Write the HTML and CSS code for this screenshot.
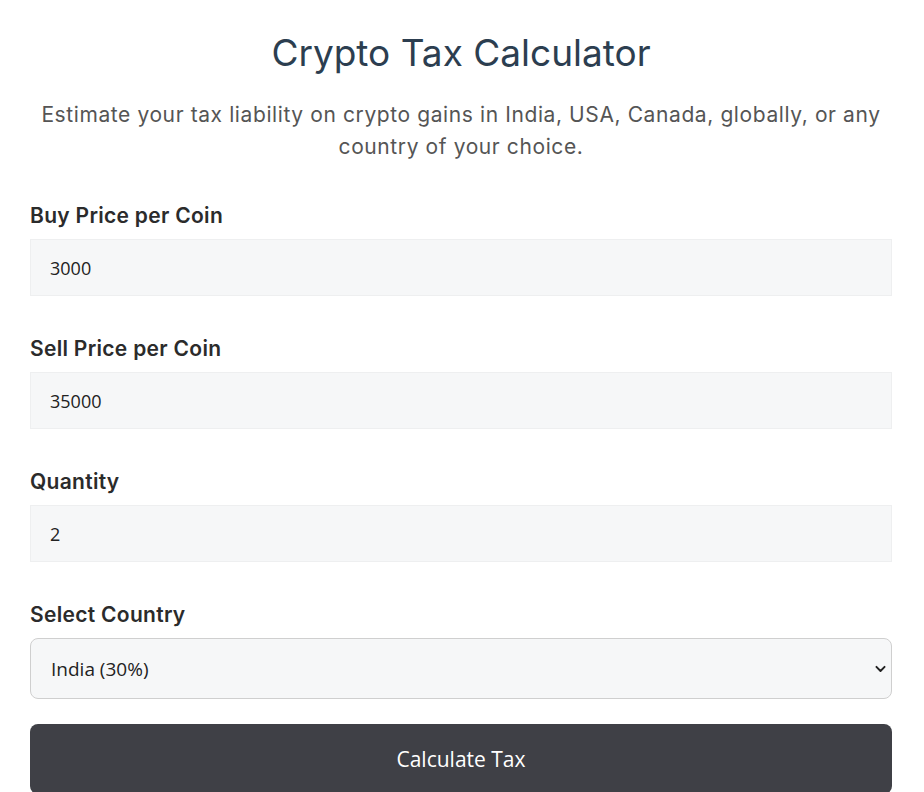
FILE: index.html
```html
<!DOCTYPE html>
<html>
  <head>
	<title>Crypto Tax Calculator</title>
	<meta charset="UTF-8">
	<meta name="viewport" content="width=device-width, initial-scale=1.0">
	<link rel="stylesheet" href="styles.css">
  </head>
  <body>
	<div class="calculator">
		<h1>Crypto Tax Calculator</h1>
		<p class="intro">Estimate your tax liability on crypto gains in India, USA, Canada, globally, or any country of your choice.</p>

		<form class="tax-form" autocomplete="off">
			<div class="field">
				<label for="buy">Buy Price per Coin</label>
				<input id="buy" type="number" value="3000" />
			</div>
			<div class="field">
				<label for="sell">Sell Price per Coin</label>
				<input id="sell" type="number" value="35000" />
			</div>
			<div class="field">
				<label for="qty">Quantity</label>
				<input id="qty" type="number" value="2" />
			</div>
			<div class="field">
				<label for="country">Select Country</label>
				<div class="select-wrap">
					<select id="country">
						<option>India (30%)</option>
						<option>USA (20%)</option>
						<option>Canada (25%)</option>
					</select>
					<svg class="chevron" viewBox="0 0 16 16" width="16" height="16"><path d="M3 6l5 5 5-5" fill="none" stroke="#222" stroke-width="2.4" stroke-linecap="round" stroke-linejoin="round"/></svg>
				</div>
			</div>
			<button type="button" class="calc-btn">Calculate Tax</button>
		</form>
	</div>
  </body>
</html>
```

FILE: styles.css
```css
html, body {
	box-sizing: border-box;
}

body {
	margin: 0;
	background: #fff;
	font-family: "Inter", "Open Sans", sans-serif;
	color: #333;
}

.calculator {
	padding: 0 32px 0 30px;
}

h1 {
	margin: 0;
	padding-top: 31px;
	font-size: 37px;
	line-height: 44px;
	font-weight: 400;
	color: #2c3e50;
	text-align: center;
}

.intro {
	margin: 24px 0 0;
	font-size: 21px;
	line-height: 32px;
	letter-spacing: 0.6px;
	color: #555;
	text-align: center;
}

.tax-form {
	margin-top: 38px;
}

.field {
	margin-bottom: 38px;
}

.field:last-of-type {
	margin-bottom: 25px;
}

label {
	display: block;
	font-size: 21px;
	line-height: 30px;
	letter-spacing: 0.3px;
	font-weight: 600;
	color: #2b2b2b;
	margin-bottom: 8px;
}

input, select {
	display: block;
	width: 100%;
	box-sizing: border-box;
	font-family: "Open Sans", "Noto Sans", sans-serif;
	font-size: 18px;
	color: #222;
	background: #f6f7f8;
	outline: none;
}

input {
	height: 57px;
	padding: 0 19px;
	border: 1px solid #eeeff0;
	border-radius: 0;
	-moz-appearance: textfield;
}

input::-webkit-inner-spin-button,
input::-webkit-outer-spin-button {
	-webkit-appearance: none;
	margin: 0;
}

.select-wrap {
	position: relative;
}

select {
	height: 61px;
	padding: 0 20px;
	font-size: 19px;
	border: 1px solid #cfcfcf;
	border-radius: 8px;
	appearance: none;
	-webkit-appearance: none;
}

.chevron {
	position: absolute;
	right: 5px;
	top: 24px;
	width: 13px;
	height: 13px;
	pointer-events: none;
}

.calc-btn {
	display: block;
	width: 100%;
	height: 70px;
	border: none;
	border-radius: 8px;
	background: #3f4046;
	color: #fff;
	font-family: "Open Sans", "Noto Sans", sans-serif;
	font-size: 21px;
	cursor: pointer;
}
```
